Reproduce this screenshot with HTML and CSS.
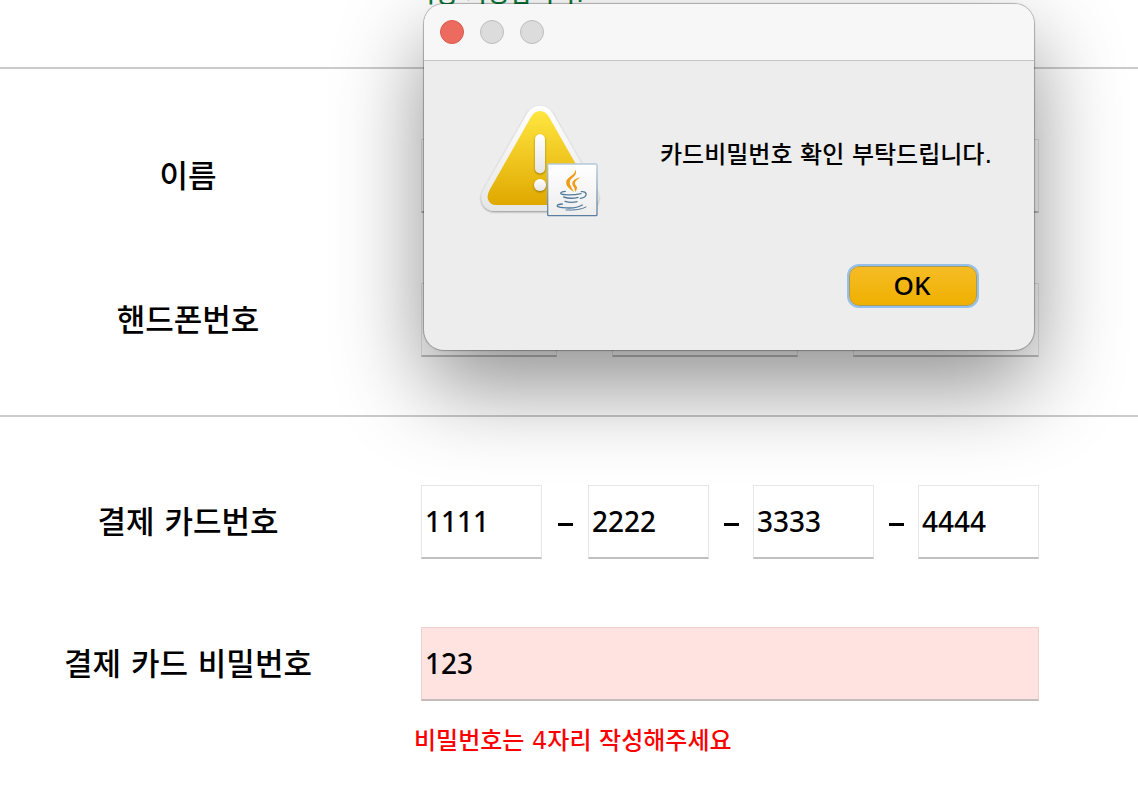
FILE: index.html
```html
<!DOCTYPE html>
<html lang="ko">
<head>
<meta charset="utf-8">
<title>결제 정보</title>
<link rel="stylesheet" href="styles.css">
</head>
<body>
<main class="page">
  <form class="form">
    <section class="section section-id">
      <p class="message message-ok">사용 가능합니다.</p>
    </section>
    <section class="section section-person">
      <div class="row">
        <label class="label" for="name">이름</label>
        <div class="fields"><input class="input" id="name" type="text"></div>
      </div>
      <div class="row">
        <label class="label" for="phone1">핸드폰번호</label>
        <div class="fields phone">
          <input class="input" id="phone1" type="text">
          <input class="input" type="text" aria-label="핸드폰번호 2">
          <input class="input" type="text" aria-label="핸드폰번호 3">
        </div>
      </div>
    </section>
    <section class="section section-card">
      <div class="row">
        <label class="label" for="card1">결제 카드번호</label>
        <div class="fields card">
          <input class="input" id="card1" type="text" value="1111">
          <span class="dash"></span>
          <input class="input" type="text" value="2222" aria-label="카드번호 2">
          <span class="dash"></span>
          <input class="input" type="text" value="3333" aria-label="카드번호 3">
          <span class="dash"></span>
          <input class="input" type="text" value="4444" aria-label="카드번호 4">
        </div>
      </div>
      <div class="row">
        <label class="label" for="pin">결제 카드 비밀번호</label>
        <div class="fields"><input class="input input-error" id="pin" type="text" value="123" aria-describedby="pin-error"></div>
      </div>
      <p class="message message-error" id="pin-error">비밀번호는 4자리 작성해주세요</p>
    </section>
  </form>

  <div class="dialog" role="alertdialog" aria-labelledby="dialog-text">
    <div class="titlebar">
      <button class="light light-close" type="button" aria-label="닫기"></button>
      <button class="light" type="button" aria-label="최소화" disabled></button>
      <button class="light" type="button" aria-label="확대" disabled></button>
    </div>
    <div class="dialog-body">
      <svg class="warning" viewBox="0 0 450 390" aria-hidden="true">
        <defs>
          <linearGradient id="yellow" x1="0" y1="0" x2="0" y2="1">
            <stop offset="0" stop-color="#ffe640"/><stop offset="1" stop-color="#e0a800"/>
          </linearGradient>
          <linearGradient id="white" x1="0" y1="0" x2="0" y2="1">
            <stop offset="0" stop-color="#ffffff"/><stop offset="1" stop-color="#e6e6e6"/>
          </linearGradient>
          <linearGradient id="tile" x1="0" y1="0" x2="0" y2="1">
            <stop offset="0" stop-color="#ffffff"/><stop offset="1" stop-color="#ededed"/>
          </linearGradient>
          <linearGradient id="frame" x1="0" y1="0" x2="0" y2="1">
            <stop offset="0" stop-color="#b4c8da"/><stop offset="1" stop-color="#5d7f9f"/>
          </linearGradient>
          <filter id="soft" x="-20%" y="-20%" width="140%" height="140%">
            <feDropShadow dx="0" dy="3" stdDeviation="3" flood-color="#000" flood-opacity=".4"/>
          </filter>
        </defs>
        <path d="M172 55Q185 32 210 32T248 55L379 283Q392 306 382 325T344 348H76Q48 348 38 326T41 283Z" fill="url(#white)" filter="url(#soft)"/>
        <path d="M183 66Q193 48 210 48T237 66L362 285Q370 300 364 315T342 330H78Q61 330 55 316T59 284Z" fill="url(#yellow)"/>
        <rect x="195" y="118" width="30" height="117" rx="15" fill="url(#white)" filter="url(#soft)"/>
        <circle cx="210" cy="270" r="18" fill="url(#white)" filter="url(#soft)"/>
        <rect x="233" y="207" width="148" height="155" rx="3" fill="url(#tile)" stroke="url(#frame)" stroke-width="4"/>
        <g fill="#f19a12">
          <path d="M316 223C325 240 306 247 300 257C296 266 305 277 312 291C297 282 286 272 289 259C293 245 319 239 316 223Z"/>
          <path d="M331 247C318 250 307 257 307 265C307 274 316 278 315 291C325 279 321 276 316 269C311 261 322 254 331 247Z"/>
        </g>
        <g fill="none" stroke="#527b9c" stroke-width="4" stroke-linecap="round">
          <path d="M286 289C270 291 265 298 286 299Q309 301 333 296"/>
          <path d="M334 290C351 287 356 306 331 310"/>
          <path d="M281 306Q302 313 324 307"/>
          <path d="M285 319Q303 325 321 320"/>
          <path d="M277 327C258 328 254 336 279 338Q318 342 337 330"/>
          <path d="M288 345Q329 347 348 336" stroke-width="3"/>
        </g>
      </svg>
      <p class="dialog-text" id="dialog-text">카드비밀번호 확인 부탁드립니다.</p>
    </div>
    <div class="actions"><button class="ok" type="button">OK</button></div>
  </div>
</main>
</body>
</html>
```
FILE: styles.css
```css
* { box-sizing: border-box; }

body {
  margin: 0;
  background: #fff;
  color: #000;
  font-family: "DejaVu Sans", "Noto Sans CJK KR", sans-serif;
  font-weight: 500;
}

p { margin: 0; }

.page {
  position: relative;
  min-height: 100vh;
  overflow: hidden;
}

.section {
  display: flex;
  flex-direction: column;
  padding-right: 99px;
}

.section-id {
  padding-bottom: 57px;
  border-bottom: 2px solid #cbcbcb;
}

.section-person {
  gap: 70px;
  padding-top: 70px;
  padding-bottom: 58px;
  border-bottom: 2px solid #cbcbcb;
}

.section-card {
  gap: 68px;
  padding-top: 68px;
}

.row {
  display: grid;
  grid-template-columns: 376px 1fr;
  column-gap: 45px;
  align-items: center;
}

.label {
  text-align: center;
  font-size: 31px;
  line-height: 40px;
}

.fields { display: grid; }

.phone {
  grid-template-columns: 136fr 186fr 186fr;
  column-gap: 55px;
}

.card {
  grid-template-columns: 1fr 46px 1fr 44px 1fr 44px 1fr;
  align-items: center;
}

.input {
  width: 100%;
  min-width: 0;
  height: 74px;
  padding: 0 3px 1px;
  border: 1px solid #e6e6e6;
  border-bottom: 2px solid #c0c0c0;
  background: #fff;
  color: #000;
  font-family: "Noto Sans", sans-serif;
  font-size: 28px;
  font-weight: 500;
  outline: none;
}

.input-error {
  border-color: #f0cfcc;
  border-bottom-color: #c4bcbb;
  background: #ffe3e0;
}

.dash {
  justify-self: center;
  width: 15px;
  height: 3px;
  margin-top: 4px;
  background: #000;
}

.message {
  padding-left: 414px;
  font-size: 24px;
  line-height: 32px;
}

.message-ok {
  display: flex;
  align-items: flex-end;
  height: 10px;
  color: #0b7a3c;
}

.message-error {
  margin-top: -44px;
  color: #f00;
}

.dialog {
  position: absolute;
  top: 4px;
  left: 424px;
  width: 610px;
  padding-bottom: 44px;
  border-radius: 20px;
  background: #ededed;
  box-shadow: 0 0 1px 1px rgba(0, 0, 0, .28), 0 36px 88px rgba(0, 0, 0, .44);
}

.titlebar {
  display: flex;
  align-items: center;
  gap: 16px;
  height: 57px;
  padding: 0 16px;
  border-bottom: 1px solid #c4c4c4;
  border-radius: 20px 20px 0 0;
  background: #f7f7f7;
}

.light {
  width: 24px;
  height: 24px;
  padding: 0;
  border: 1px solid #bdbdbd;
  border-radius: 50%;
  background: #dcdcdc;
}

.light-close {
  border-color: #d9584c;
  background: #ed6a5e;
}

.dialog-body {
  display: flex;
  align-items: flex-start;
  gap: 40px;
  padding: 34px 40px 0 46px;
}

.warning {
  flex: none;
  width: 150px;
  height: 130px;
}

.dialog-text {
  margin-top: 44px;
  font-size: 24px;
  line-height: 32px;
  white-space: nowrap;
}

.actions {
  display: flex;
  justify-content: flex-end;
  margin-top: 41px;
  padding-right: 57px;
}

.ok {
  width: 128px;
  height: 40px;
  padding: 0 2px 2px 0;
  border: 1px solid #a99b55;
  border-radius: 10px;
  background: linear-gradient(#f5bc25, #f0b000);
  box-shadow: 0 0 0 2px #93c0ec;
  color: #000;
  font-family: "Noto Sans", sans-serif;
  font-size: 26px;
  font-weight: 500;
  line-height: 36px;
}
```
